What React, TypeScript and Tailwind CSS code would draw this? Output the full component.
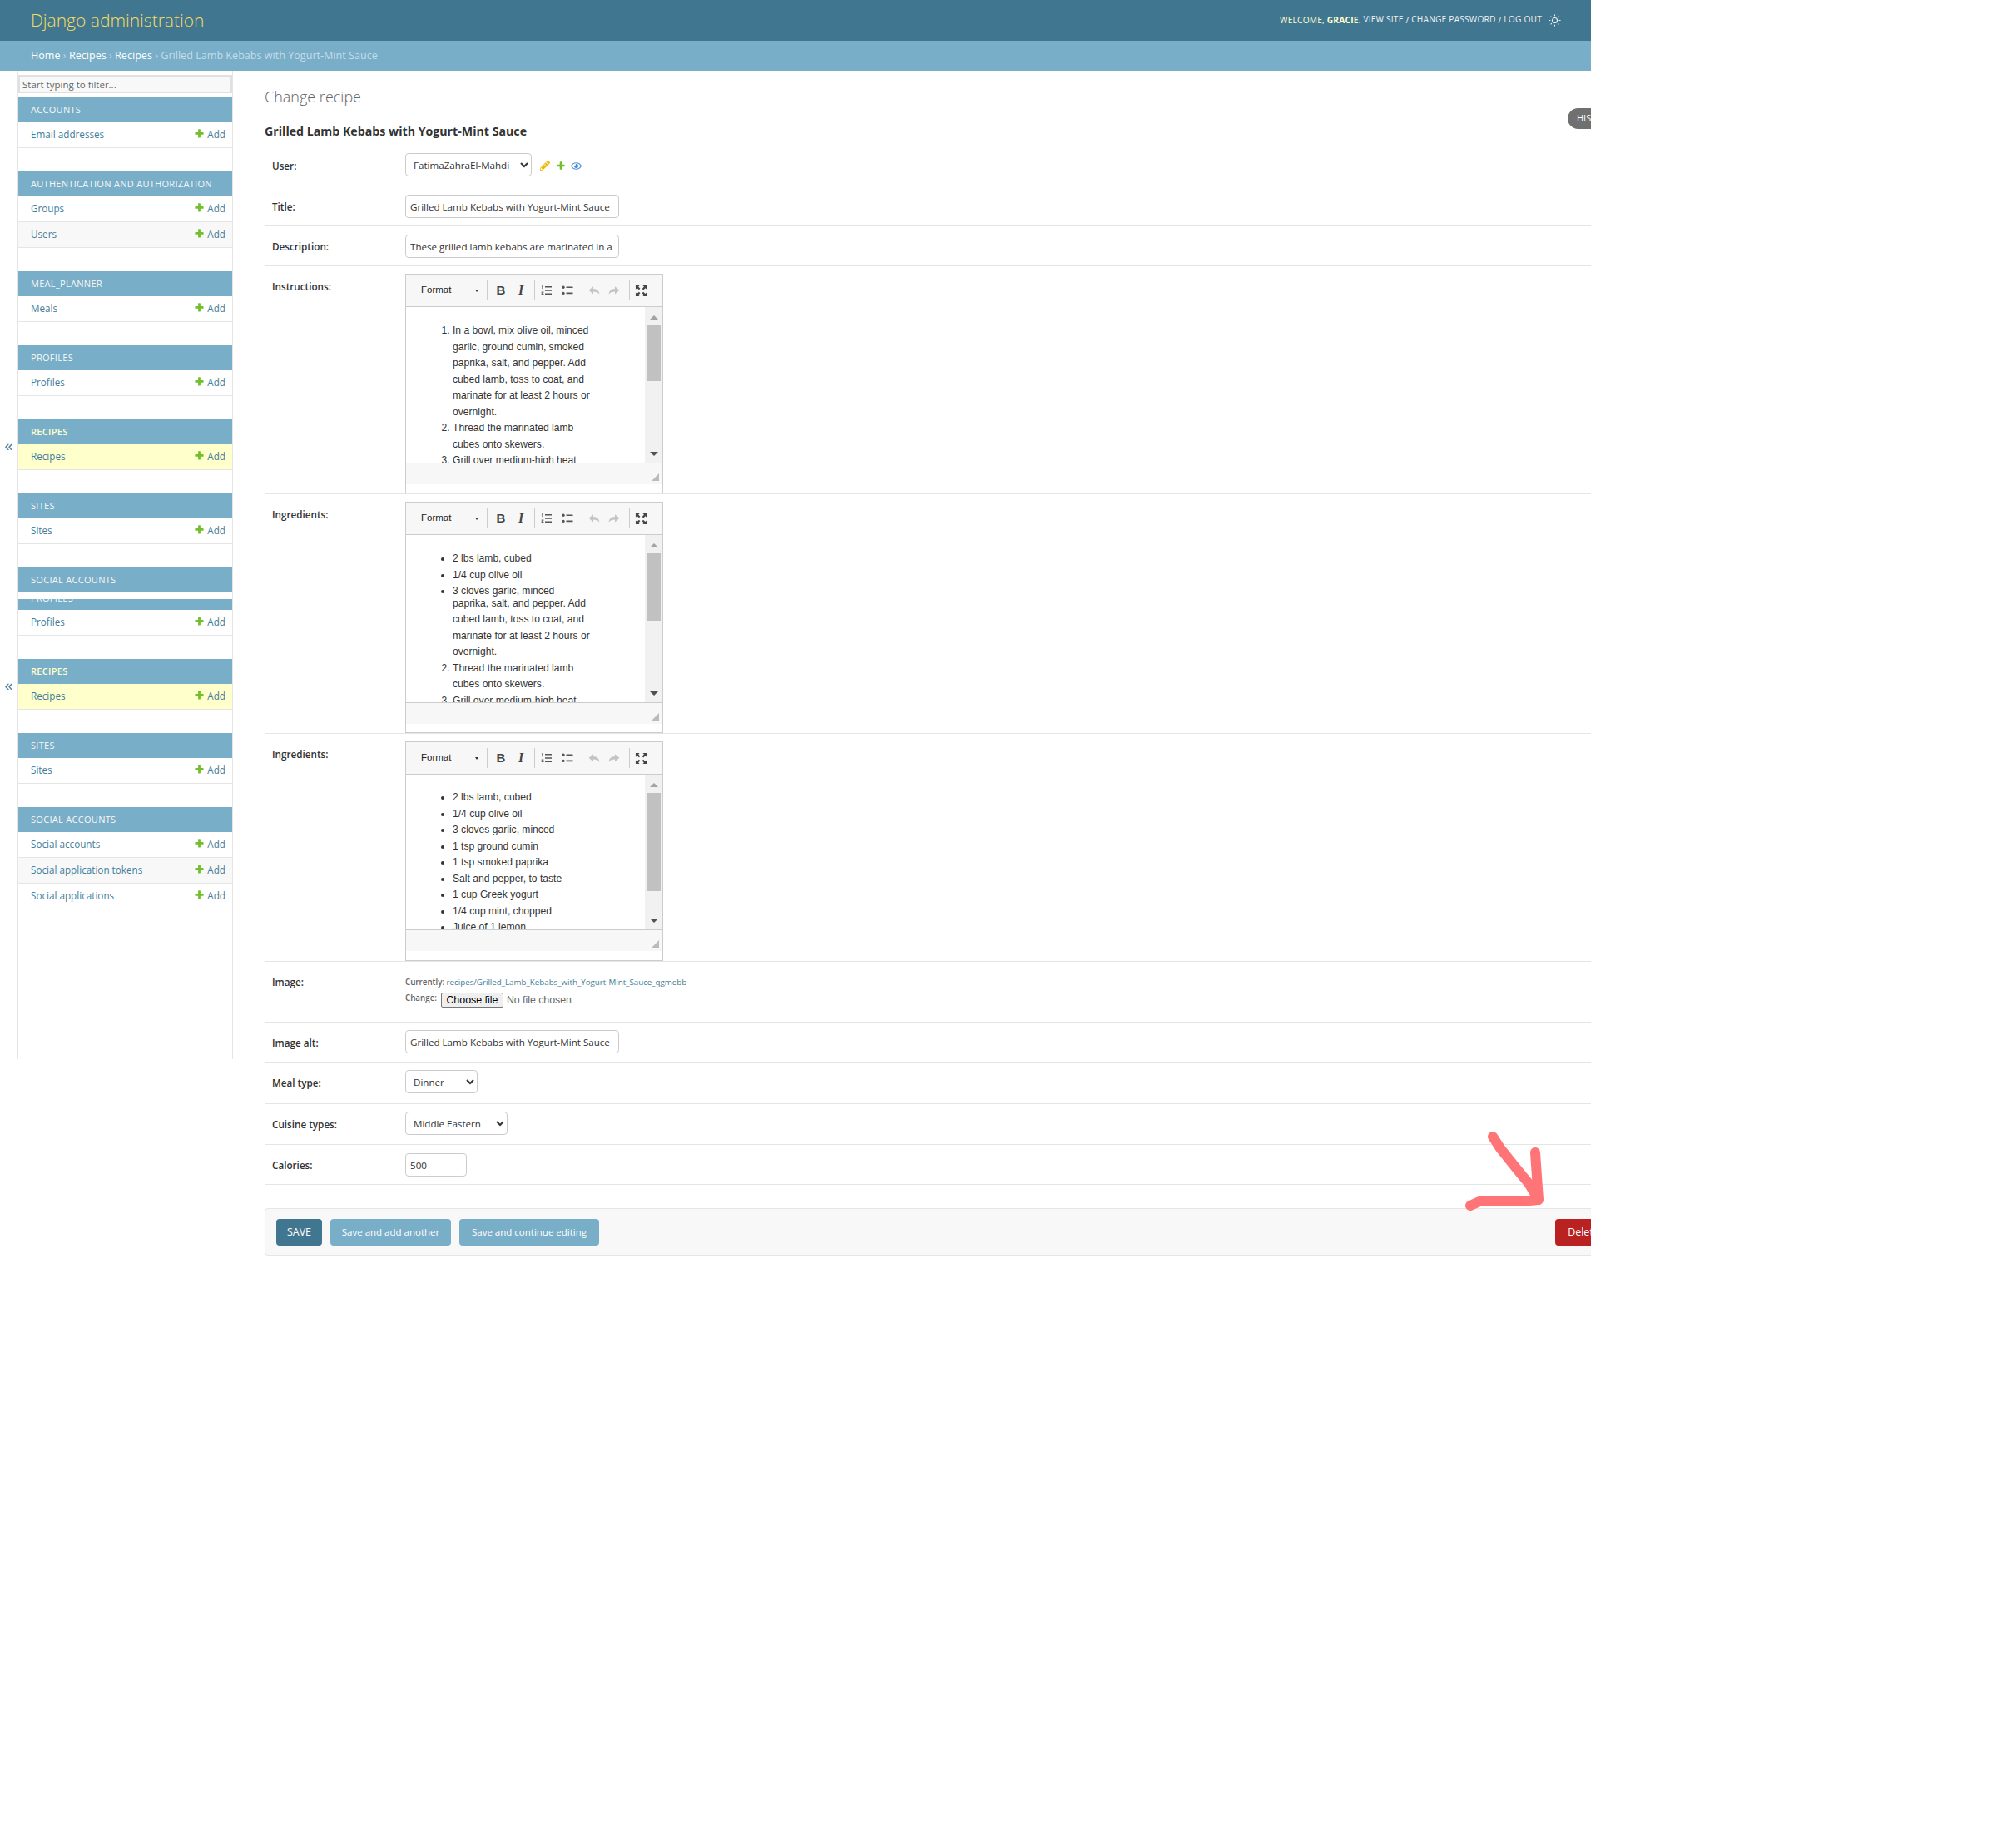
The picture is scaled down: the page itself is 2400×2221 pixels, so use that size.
import { ReactNode } from "react";
import { FaPencilAlt, FaRegEye } from "react-icons/fa";

const PLUS = "M1600 796v192q0 40-28 68t-68 28h-416v416q0 40-28 68t-68 28h-192q-40 0-68-28t-28-68v-416h-416q-40 0-68-28t-28-68v-192q0-40 28-68t68-28h416v-416q0-40 28-68t68-28h192q40 0 68 28t28 68v416h416q40 0 68 28t28 68z";

function Plus({ className }: { className: string }) {
    return (
        <svg viewBox="0 0 1792 1792" className={className}>
            <path fill="#70bf2b" d={PLUS} />
        </svg>
    );
}

function SideRow({ name, shaded, current }: { name: string; shaded?: boolean; current?: boolean }) {
    const bg = current ? "bg-[#ffffcc]" : shaded ? "bg-[#f8f8f8]" : "bg-white";
    return (
        <div className={`flex h-[31px] items-center justify-between border-b border-[#e5e5e5] pl-[15px] pr-[8px] text-[11.7px] text-[#447e9b] ${bg}`}>
            <span>{name}</span>
            <span className="flex items-center gap-[3px]">
                <Plus className="mb-[3px] h-[13px] w-[13px]" />
                <span>Add</span>
            </span>
        </div>
    );
}

function Caption({ name, current }: { name: string; current?: boolean }) {
    return (
        <div className={`flex h-[30px] items-center bg-[#79aec8] pl-[15px] text-[11px] uppercase tracking-[0.3px] ${current ? "font-semibold text-[#ffffcc]" : "text-[#f7f7f7]"}`}>
            {name}
        </div>
    );
}

function Module({ name, rows, current }: { name: string; rows: string[]; current?: boolean }) {
    return (
        <div className="mb-[28px]">
            <Caption name={name} current={current} />
            {rows.map((row, i) => (
                <SideRow key={row} name={row} current={current} shaded={i % 2 === 1} />
            ))}
        </div>
    );
}

function Sidebar() {
    return (
        <aside className="h-[1188px] w-[259px] shrink-0 border-x border-[#e5e5e5]">
            <div className="pb-[5px] pt-[5px]">
                <input placeholder="Start typing to filter..." className="block h-[22px] w-full border-2 border-[#e0e0e0] bg-[#f8f8f8] px-[3px] text-[11.5px] text-[#333] placeholder:text-[#666]" />
            </div>
            <Module name="Accounts" rows={["Email addresses"]} />
            <Module name="Authentication and Authorization" rows={["Groups", "Users"]} />
            <Module name="Meal_Planner" rows={["Meals"]} />
            <Module name="Profiles" rows={["Profiles"]} />
            <Module name="Recipes" rows={["Recipes"]} current />
            <Module name="Sites" rows={["Sites"]} />
            <div className="mb-[8px]">
                <Caption name="Social Accounts" />
            </div>
            <div className="mb-[28px]">
                <div className="h-[13px] overflow-hidden bg-[#79aec8] pl-[15px] text-[11px] uppercase leading-[14px] tracking-[0.3px] text-[#f7f7f7]">
                    <div className="-mt-[8px]">Profiles</div>
                </div>
                <SideRow name="Profiles" />
            </div>
            <Module name="Recipes" rows={["Recipes"]} current />
            <Module name="Sites" rows={["Sites"]} />
            <Module name="Social Accounts" rows={["Social accounts", "Social application tokens", "Social applications"]} />
        </aside>
    );
}

function Row({ label, className, labelClass, children }: { label: string; className: string; labelClass: string; children: ReactNode }) {
    return (
        <div className={`flex border-b border-[#e5e5e5] ${className}`}>
            <div className={`w-[169px] shrink-0 pl-[9px] text-[11.7px] font-semibold leading-[16px] text-[#333] ${labelClass}`}>{label}</div>
            {children}
        </div>
    );
}

function TextBox({ value, className }: { value: string; className: string }) {
    return (
        <input defaultValue={value} className={`h-[28px] rounded-[4px] border border-[#cccccc] bg-white px-[5px] text-[11.6px] text-[#333] ${className}`} />
    );
}

function Choice({ value, className }: { value: string; className: string }) {
    return (
        <select defaultValue={value} className={`h-[28px] rounded-[4px] border border-[#cccccc] bg-white pl-[5px] text-[11.6px] text-[#333] ${className}`}>
            <option>{value}</option>
        </select>
    );
}

function Separator({ className }: { className: string }) {
    return <div className={`h-[24px] w-px bg-[#cccccc] ${className}`} />;
}

function Toolbar() {
    return (
        <div className="flex h-[39px] shrink-0 items-center border-b border-[#cccccc] bg-[#f7f7f7] font-['Liberation_Sans',sans-serif]">
            <div className="flex w-[97px] items-center pl-[18px] pr-[10px] text-[11.5px] text-[#222]">
                <span className="flex-1">Format</span>
                <span className="h-0 w-0 border-x-[2.5px] border-t-[3px] border-x-transparent border-t-[#333]" />
            </div>
            <Separator className="ml-0 mr-[4px]" />
            <span className="w-[24px] text-center text-[15px] font-bold text-[#444]">B</span>
            <span className="w-[24px] text-center font-['Liberation_Serif',serif] text-[16px] font-bold italic text-[#444]">I</span>
            <Separator className="ml-[4px] mr-[2px]" />
            <div className="flex w-[24px] justify-center">
                <svg viewBox="0 0 14 14" className="h-[14px] w-[14px]" fill="#555">
                    <path d="M5 2h8v1.4H5zM5 6.3h8v1.4H5zM5 10.6h8v1.4H5z" />
                    <path d="M1.4 1.2h1v4h-1V2.2h-.7zM.7 8.4h2.6v1.8H1.6v.9h1.8v.9H.7v-2.5h1.7v-.3H.7z" />
                </svg>
            </div>
            <div className="ml-px flex w-[24px] justify-center">
                <svg viewBox="0 0 14 14" className="h-[14px] w-[14px]" fill="#555">
                    <path d="M5.5 2.4h8v1.6h-8zM5.5 9.6h8v1.6h-8z" />
                    <circle cx="2" cy="3.2" r="1.7" />
                    <circle cx="2" cy="10.4" r="1.7" />
                </svg>
            </div>
            <Separator className="ml-[5px] mr-[2px]" />
            <div className="flex w-[24px] justify-center">
                <svg viewBox="0 0 14 14" className="h-[14px] w-[14px]" fill="#c4c4c4">
                    <path d="M6 2.2v2.9c4.4.1 7 2.3 7.4 6.7-1.6-2.5-3.9-3.3-7.4-3.3v3L.6 6.8z" />
                </svg>
            </div>
            <div className="flex w-[24px] justify-center">
                <svg viewBox="0 0 14 14" className="h-[14px] w-[14px] -scale-x-100" fill="#c4c4c4">
                    <path d="M6 2.2v2.9c4.4.1 7 2.3 7.4 6.7-1.6-2.5-3.9-3.3-7.4-3.3v3L.6 6.8z" />
                </svg>
            </div>
            <Separator className="ml-[6px] mr-px" />
            <div className="flex w-[24px] justify-center">
                <svg viewBox="0 0 16 16" className="h-[15px] w-[15px]" fill="#444">
                    <path d="M1 1h5L4.4 2.6l2.4 2.5-1.6 1.6-2.5-2.4L1 6zM15 1v5l-1.6-1.6-2.5 2.4-1.6-1.6 2.4-2.5L10 1zM1 15v-5l1.7 1.7 2.5-2.5 1.6 1.6-2.4 2.6L6 15zM15 15h-5l1.6-1.6-2.4-2.6 1.6-1.6 2.5 2.5L15 10z" />
                </svg>
            </div>
        </div>
    );
}

function Editor({ bodyClass, textClass, thumbClass, children }: { bodyClass: string; textClass: string; thumbClass: string; children: ReactNode }) {
    return (
        <div className="flex w-[310px] flex-col border border-[#cccccc]">
            <Toolbar />
            <div className={`flex overflow-hidden bg-white font-['Liberation_Sans',sans-serif] text-[12.1px] leading-[19.5px] text-[#333] ${bodyClass}`}>
                <div className={`min-w-0 flex-1 overflow-hidden pl-[56px] ${textClass}`}>{children}</div>
                <div className="flex w-[21px] shrink-0 flex-col items-center bg-[#f1f1f1]">
                    <span className="mt-[10px] h-0 w-0 border-x-[5px] border-b-[5px] border-x-transparent border-b-[#a3a3a3]" />
                    <div className={`mt-[7px] w-[17px] bg-[#c1c1c1] ${thumbClass}`} />
                    <span className="mb-[8px] mt-auto h-0 w-0 border-x-[5px] border-t-[5px] border-x-transparent border-t-[#505050]" />
                </div>
            </div>
            <div className="flex h-[26px] shrink-0 items-end justify-end border-t border-[#cccccc] bg-[#f7f7f7] pb-[4px] pr-[4px]">
                <svg viewBox="0 0 9 9" className="h-[9px] w-[9px]">
                    <path fill="#bbbbbb" d="M9 0v9H0z" />
                </svg>
            </div>
        </div>
    );
}

const STEPS_LIST = (
    <>
        <li>In a bowl, mix olive oil, minced garlic, ground cumin, smoked paprika, salt, and pepper. Add cubed lamb, toss to coat, and marinate for at least 2 hours or overnight.</li>
        <li>Thread the marinated lamb cubes onto skewers.</li>
        <li>Grill over medium-high heat</li>
    </>
);

function SaveButton({ label, className }: { label: string; className: string }) {
    return (
        <button className={`flex h-[32px] items-center justify-center rounded-[4px] text-white ${className}`}>{label}</button>
    );
}

export default function App() {
    return (
        <div className="relative w-[1912px] overflow-hidden bg-white font-['Open_Sans',sans-serif] text-[#333]">
            <header className="flex h-[49px] items-center justify-between bg-[#417690] pl-[37px] pr-[36px]">
                <div className="text-[21px] font-light text-[#f5dd5d]">Django administration</div>
                <div className="flex items-center text-[10.2px] uppercase tracking-[0.2px] text-[#ffffcc]">
                    <span>Welcome, <strong className="font-bold">Gracie</strong>.&nbsp;</span>
                    <span className="border-b border-[#ffffff44] text-[#f2f2f2]">View site</span>
                    <span className="text-[#f2f2f2]">&nbsp;/&nbsp;</span>
                    <span className="border-b border-[#ffffff44] text-[#f2f2f2]">Change password</span>
                    <span className="text-[#f2f2f2]">&nbsp;/&nbsp;</span>
                    <span className="border-b border-[#ffffff44] text-[#f2f2f2]">Log out</span>
                    <svg viewBox="0 0 16 16" className="ml-[8px] h-[15px] w-[15px]" fill="none" stroke="#f2f2f2">
                        <circle cx="8" cy="8" r="3.2" strokeWidth="1.2" />
                        <path strokeWidth="1.1" d="M8 .5v2M8 13.5v2M.5 8h2M13.5 8h2M2.7 2.7l1.4 1.4M11.9 11.9l1.4 1.4M2.7 13.3l1.4-1.4M11.9 4.1l1.4-1.4" />
                    </svg>
                </div>
            </header>
            <div className="flex h-[36px] items-center bg-[#79aec8] pl-[37px] text-[12.6px] text-[#c4dce8]">
                <span className="text-white">Home</span>
                <span>&nbsp;›&nbsp;</span>
                <span className="text-white">Recipes</span>
                <span>&nbsp;›&nbsp;</span>
                <span className="text-white">Recipes</span>
                <span>&nbsp;›&nbsp;</span>
                <span>Grilled Lamb Kebabs with Yogurt-Mint Sauce</span>
            </div>

            <div className="flex">
                <div className="flex h-[1188px] w-[21px] shrink-0 flex-col items-center font-['Liberation_Sans',sans-serif] text-[18px] leading-[20px] text-[#447e9b]">
                    <span className="mt-[441px]">«</span>
                    <span className="mt-[268px]">«</span>
                </div>
                <Sidebar />

                <main className="relative min-w-0 flex-1 pl-[38px]">
                    <div className="absolute left-[1604px] top-[45px] flex h-[25px] w-[90px] items-center rounded-full bg-[#707070] pl-[11px] text-[11px] text-white">HISTORY</div>

                    <h1 className="pt-[19px] text-[18px] font-light leading-[24px] text-[#666]">Change recipe</h1>
                    <h2 className="mt-[20px] text-[14.2px] font-bold leading-[20px] text-[#333]">Grilled Lamb Kebabs with Yogurt-Mint Sauce</h2>

                    <Row label="User:" className="mt-[9px] h-[47px] pt-[7px]" labelClass="pt-[7px]">
                        <Choice value="FatimaZahraEl-Mahdi" className="w-[152px]" />
                        <div className="ml-[10px] mt-px flex h-[28px] items-center">
                            <FaPencilAlt className="h-[12px] w-[12px] text-[#efb80b]" />
                            <Plus className="ml-[7px] h-[12px] w-[12px]" />
                            <FaRegEye className="ml-[6px] h-[13px] w-[13px] text-[#4a90d9]" />
                        </div>
                    </Row>
                    <Row label="Title:" className="h-[48px] pt-[10px]" labelClass="pt-[6px]">
                        <TextBox value="Grilled Lamb Kebabs with Yogurt-Mint Sauce" className="w-[257px]" />
                    </Row>
                    <Row label="Description:" className="h-[48px] pt-[10px]" labelClass="pt-[6px]">
                        <TextBox value="These grilled lamb kebabs are marinated in a flavorful mixture" className="w-[257px]" />
                    </Row>
                    <Row label="Instructions:" className="h-[274px] pt-[9px]" labelClass="pt-[7px]">
                        <Editor bodyClass="h-[187px]" textClass="pt-[19px]" thumbClass="h-[67px]">
                            <ol className="w-[172px] list-decimal">{STEPS_LIST}</ol>
                        </Editor>
                    </Row>
                    <Row label="Ingredients:" className="h-[288px] pt-[9px]" labelClass="pt-[7px]">
                        <Editor bodyClass="h-[201px]" textClass="pt-[19px]" thumbClass="h-[81px]">
                            <ul className="list-disc">
                                <li>2 lbs lamb, cubed</li>
                                <li>1/4 cup olive oil</li>
                                <li>3 cloves garlic, minced</li>
                            </ul>
                            <div className="-mt-[5px] w-[172px]">paprika, salt, and pepper. Add cubed lamb, toss to coat, and marinate for at least 2 hours or overnight.</div>
                            <ol start={2} className="w-[172px] list-decimal">
                                <li>Thread the marinated lamb cubes onto skewers.</li>
                                <li>Grill over medium-high heat</li>
                            </ol>
                        </Editor>
                    </Row>
                    <Row label="Ingredients:" className="h-[274px] pt-[9px]" labelClass="pt-[7px]">
                        <Editor bodyClass="h-[186px]" textClass="pt-[18px]" thumbClass="h-[118px]">
                            <ul className="list-disc">
                                <li>2 lbs lamb, cubed</li>
                                <li>1/4 cup olive oil</li>
                                <li>3 cloves garlic, minced</li>
                                <li>1 tsp ground cumin</li>
                                <li>1 tsp smoked paprika</li>
                                <li>Salt and pepper, to taste</li>
                                <li>1 cup Greek yogurt</li>
                                <li>1/4 cup mint, chopped</li>
                                <li>Juice of 1 lemon</li>
                            </ul>
                        </Editor>
                    </Row>
                    <Row label="Image:" className="h-[73px] pt-[16px]" labelClass="">
                        <div className="text-[9.75px] leading-[14px]">
                            <div className="pt-[2px]">
                                <strong className="font-semibold text-[#666]">Currently: </strong>
                                <span className="text-[#447e9b]">recipes/Grilled_Lamb_Kebabs_with_Yogurt-Mint_Sauce_qgmebb</span>
                            </div>
                            <div className="mt-[5px] flex items-start">
                                <strong className="font-semibold text-[#666]">Change:</strong>
                                <button className="ml-[5px] h-[18px] w-[75px] rounded-[2px] border border-[#767676] bg-[#efefef] font-['Liberation_Sans',sans-serif] text-[12.4px] leading-[16px] text-black">Choose file</button>
                                <span className="ml-[4px] font-['Liberation_Sans',sans-serif] text-[12.3px] leading-[18px] text-[#666]">No file chosen</span>
                            </div>
                        </div>
                    </Row>
                    <Row label="Image alt:" className="h-[48px] pt-[9px]" labelClass="pt-[7px]">
                        <TextBox value="Grilled Lamb Kebabs with Yogurt-Mint Sauce" className="w-[257px]" />
                    </Row>
                    <Row label="Meal type:" className="h-[50px] pt-[9px]" labelClass="pt-[7px]">
                        <Choice value="Dinner" className="w-[87px]" />
                    </Row>
                    <Row label="Cuisine types:" className="h-[49px] pt-[9px]" labelClass="pt-[7px]">
                        <Choice value="Middle Eastern" className="w-[123px]" />
                    </Row>
                    <Row label="Calories:" className="h-[48px] pt-[10px]" labelClass="pt-[6px]">
                        <TextBox value="500" className="w-[74px]" />
                    </Row>

                    <div className="mt-[28px] flex h-[57px] w-[1633px] items-center justify-between rounded-[4px] border border-[#e5e5e5] bg-[#f8f8f8] px-[13px]">
                        <div className="flex gap-[10px]">
                            <SaveButton label="SAVE" className="w-[55px] bg-[#417690] pt-[2px] text-[12.5px]" />
                            <SaveButton label="Save and add another" className="w-[145px] bg-[#79aec8] text-[11.5px]" />
                            <SaveButton label="Save and continue editing" className="w-[168px] bg-[#79aec8] text-[11.5px]" />
                        </div>
                        <SaveButton label="Delete" className="w-[68px] bg-[#ba2121] pt-[2px] text-[12.5px]" />
                    </div>
                    <div className="h-[712px]" />
                </main>
            </div>

            {/* red marker arrow drawn over the screenshot */}
            <svg viewBox="0 0 120 110" className="absolute left-[1750px] top-[1350px] h-[110px] w-[120px]" fill="none" stroke="#ff7477" strokeWidth="12" strokeLinecap="round" strokeLinejoin="round">
                <path d="M44 16L53 30L73 55L87 72L99 92L96 50L95 35M17 99L28 94L77 94L99 92" />
            </svg>
        </div>
    );
}
